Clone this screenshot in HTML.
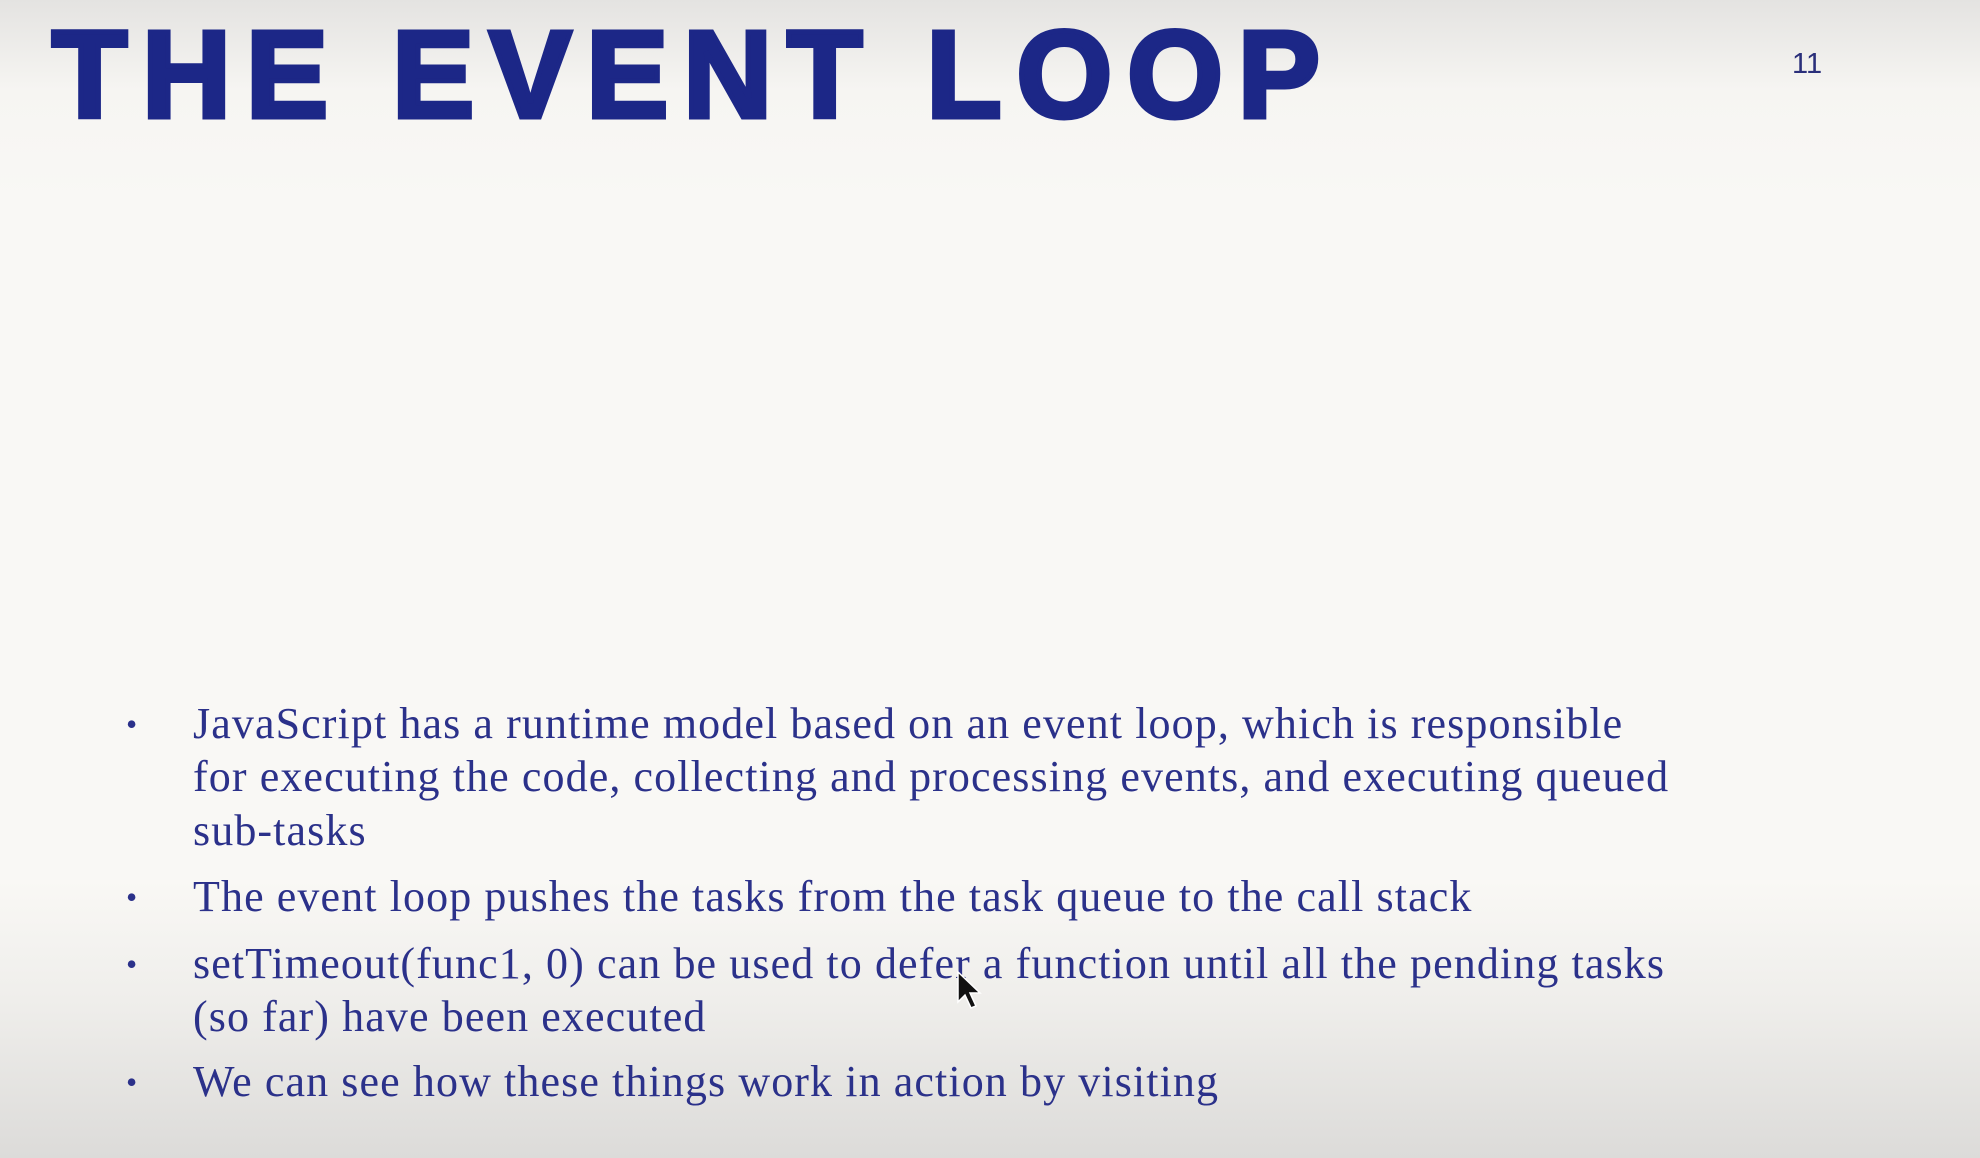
<!DOCTYPE html>
<html><head><meta charset="utf-8"><style>
html,body{margin:0;padding:0}
body{width:1980px;height:1158px;position:relative;overflow:hidden;
background:linear-gradient(180deg,#e4e3e1 0px,#f6f5f2 90px,#f9f8f5 200px,#f9f8f5 880px,#efeeeb 1000px,#dcdbd9 1158px);}
.t{position:absolute;left:52px;top:14px;font-family:"Liberation Sans",Arial,sans-serif;font-weight:bold;font-size:123px;line-height:123px;color:#1c2787;letter-spacing:15px;-webkit-text-stroke:5px #1c2787;white-space:nowrap}
.n{position:absolute;left:1792px;top:48px;font-family:"Liberation Sans",sans-serif;font-size:29px;color:#2a2f7a}
.l{position:absolute;left:193px;font-family:"Liberation Serif",serif;font-size:44px;line-height:44px;letter-spacing:1.1px;color:#2b318a;white-space:nowrap}
.b{position:absolute;left:126px;font-family:"Liberation Serif",serif;font-size:32px;line-height:44px;color:#2b318a}
</style></head><body>
<div class="t">THE EVENT LOOP</div>
<div class="n">11</div>
<div class="b" style="top:702px">•</div>
<div class="l" style="top:702px">JavaScript has a runtime model based on an event loop, which is responsible</div>
<div class="l" style="top:755px">for executing the code, collecting and processing events, and executing queued</div>
<div class="l" style="top:809px">sub-tasks</div>
<div class="b" style="top:875px">•</div>
<div class="l" style="top:875px">The event loop pushes the tasks from the task queue to the call stack</div>
<div class="b" style="top:942px">•</div>
<div class="l" style="top:942px">setTimeout(func1, 0) can be used to defer a function until all the pending tasks</div>
<div class="l" style="top:995px">(so far) have been executed</div>
<div class="b" style="top:1060px">•</div>
<div class="l" style="top:1060px">We can see how these things work in action by visiting</div>
<svg style="position:absolute;left:956px;top:970px" width="30" height="46" viewBox="0 0 30 46"><path d="M2 2 L2 32 L9 25 L15 38 L20 36 L14 23 L24 23 Z" fill="#111" stroke="#fff" stroke-width="1.5"/></svg>
</body></html>
